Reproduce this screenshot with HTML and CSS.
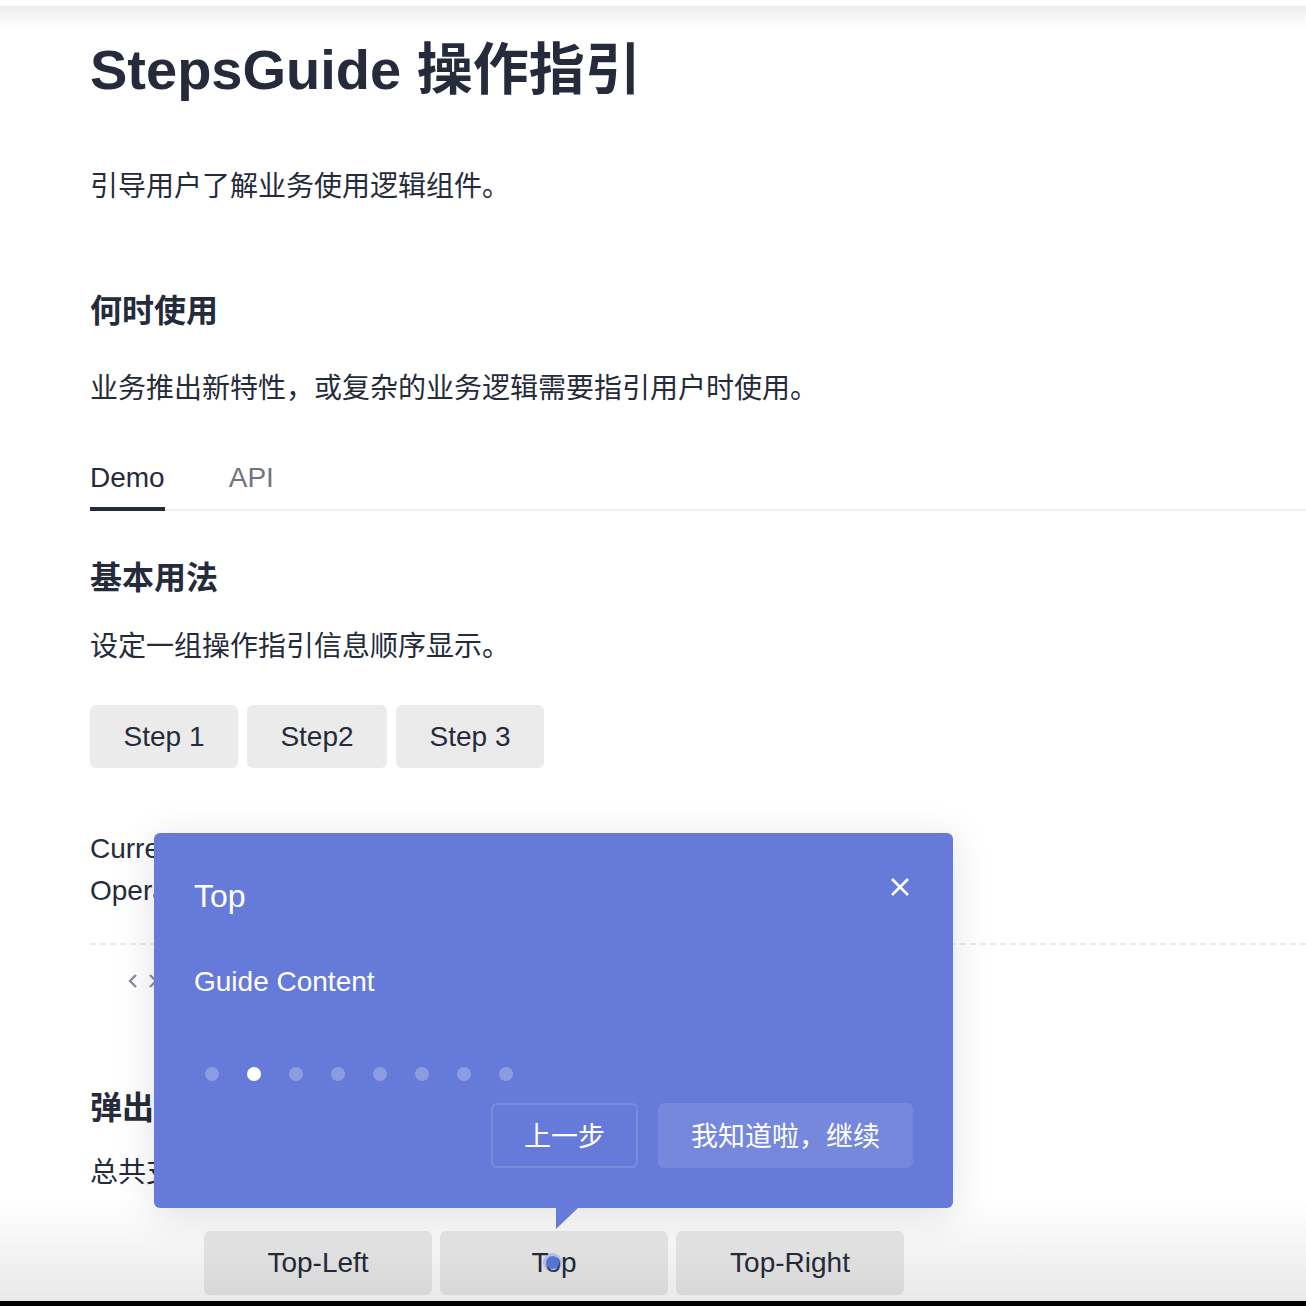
FILE: index.html
```html
<!DOCTYPE html>
<html lang="zh">
<head>
<meta charset="utf-8">
<title>StepsGuide 操作指引</title>
<link rel="stylesheet" href="styles.css">
</head>
<body>
<div class="top-shade"></div>
<main class="page">
  <h1 class="title">StepsGuide 操作指引</h1>
  <p class="desc first">引导用户了解业务使用逻辑组件。</p>
  <h2 class="heading h-when">何时使用</h2>
  <p class="desc when">业务推出新特性，或复杂的业务逻辑需要指引用户时使用。</p>

  <nav class="tabs">
    <span class="tab active">Demo</span>
    <span class="tab">API</span>
  </nav>

  <h3 class="heading h-basic">基本用法</h3>
  <p class="desc basic">设定一组操作指引信息顺序显示。</p>

  <div class="btn-row">
    <button class="btn w148">Step 1</button>
    <button class="btn w140">Step2</button>
    <button class="btn w148">Step 3</button>
  </div>

  <div class="status">
    <div>Current Step: 1</div>
    <div>Operation: next</div>
  </div>

  <div class="dashed"></div>
  <div class="code-toggle">
    <svg width="30" height="18" viewBox="0 0 30 18"><path d="M8 3 L2 9 L8 15" fill="none" stroke="#8a8e99" stroke-width="2.4"/><path d="M22 3 L28 9 L22 15" fill="none" stroke="#8a8e99" stroke-width="2.4"/></svg>
  </div>

  <h3 class="heading h-pop">弹出位置</h3>
  <p class="desc pop">总共支持 12 种弹出位置。</p>

  <div class="btn-row pos-row">
    <button class="btn w228">Top-Left</button>
    <button class="btn w228 has-dot">Top<span class="guide-dot"></span></button>
    <button class="btn w228">Top-Right</button>
  </div>
</main>

<div class="guide">
  <div class="guide-title">Top</div>
  <svg class="guide-close" width="20" height="20" viewBox="0 0 20 20"><path d="M2 2 L18 18 M18 2 L2 18" stroke="#ffffff" stroke-width="2.6" fill="none"/></svg>
  <div class="guide-content">Guide Content</div>
  <div class="guide-dots">
    <span class="dot"></span><span class="dot on"></span><span class="dot"></span><span class="dot"></span><span class="dot"></span><span class="dot"></span><span class="dot"></span><span class="dot"></span>
  </div>
  <div class="guide-actions">
    <button class="g-btn prev">上一步</button>
    <button class="g-btn next">我知道啦，继续</button>
  </div>
  <span class="guide-arrow"></span>
</div>

<div class="bottom-shade"></div>
<div class="bottom-bar"></div>
</body>
</html>
```

FILE: styles.css
```css
html, body {
  margin: 0;
  padding: 0;
  background: #ffffff;
  overflow: hidden;
}
body {
  width: 1306px;
  height: 1306px;
  position: relative;
  font-family: "Liberation Sans", "Noto Sans CJK SC", sans-serif;
  color: #252b3a;
}
.top-shade {
  position: absolute;
  left: 0;
  top: 6px;
  width: 100%;
  height: 22px;
  background: linear-gradient(to bottom, #eeeeee, rgba(255,255,255,0));
  z-index: 5;
}
.page {
  padding: 0 0 0 90px;
}
.title {
  margin: 30px 0 0 0;
  font-size: 56px;
  line-height: 80px;
  font-weight: 700;
}
.desc {
  margin: 0;
  font-size: 28px;
  line-height: 40px;
  font-family: "Noto Sans CJK SC", "Liberation Sans", sans-serif;
}
.desc.first { margin-top: 54px; }
.desc.when { margin-top: 36px; }
.desc.basic { margin-top: 27px; }
.desc.pop { margin-top: 23px; }
.heading {
  margin: 0;
  font-size: 32px;
  line-height: 44px;
  font-weight: 700;
  font-family: "Noto Sans CJK SC", "Liberation Sans", sans-serif;
}
.h-when { margin-top: 82px; }
.h-basic { margin-top: 42px; }
.h-pop { margin-top: 82px; }

.tabs {
  display: flex;
  margin-top: 52px;
  border-bottom: 2px solid #eeeeee;
}
.tab {
  font-size: 28px;
  line-height: 40px;
  color: #71757f;
  padding-bottom: 9px;
  border-bottom: 4px solid transparent;
  margin-bottom: -2px;
  margin-right: 64px;
}
.tab.active {
  color: #252b3a;
  border-bottom-color: #252b3a;
}

.btn-row {
  display: flex;
  gap: 9px;
  margin-top: 41px;
}
.btn {
  height: 63px;
  border: none;
  border-radius: 6px;
  background: #ebebeb;
  font-family: "Liberation Sans", "Noto Sans CJK SC", sans-serif;
  font-size: 28px;
  color: #252b3a;
  padding: 0;
}
.w148 { width: 148px; }
.w140 { width: 140px; }
.w228 { width: 228px; height: 64px; }
.pos-row {
  margin-left: 114px;
  gap: 8px;
}
.has-dot { position: relative; }
.guide-dot {
  position: absolute;
  left: 106px;
  top: 25px;
  width: 13px;
  height: 13px;
  border-radius: 50%;
  background: #5e7ce0;
  box-shadow: 0 0 0 3px rgba(94,124,224,0.3);
}

.status {
  margin-top: 60px;
  font-size: 28px;
  line-height: 42px;
}
.dashed {
  margin-top: 31px;
  border-top: 2px dashed #ebebeb;
}
.code-toggle {
  margin-top: 16px;
  height: 40px;
  display: flex;
  align-items: center;
  padding-left: 38px;
}

.guide {
  position: absolute;
  left: 154px;
  top: 833px;
  width: 799px;
  box-sizing: border-box;
  padding: 40px;
  background: #667bd9;
  border-radius: 6px;
  color: #ffffff;
  box-shadow: 0 6px 40px rgba(0,0,0,0.12);
  z-index: 3;
}
.guide-title {
  margin-top: 3px;
  font-size: 32px;
  line-height: 40px;
}
.guide-close {
  position: absolute;
  right: 43px;
  top: 44px;
}
.guide-content {
  margin-top: 46px;
  font-size: 28px;
  line-height: 40px;
}
.guide-dots {
  display: flex;
  gap: 28px;
  margin-top: 65px;
  padding-left: 11px;
}
.dot {
  width: 14px;
  height: 14px;
  border-radius: 50%;
  background: rgba(255,255,255,0.25);
}
.dot.on { background: #ffffff; }
.guide-actions {
  display: flex;
  justify-content: flex-end;
  gap: 20px;
  margin-top: 22px;
}
.g-btn {
  height: 65px;
  border-radius: 6px;
  font-family: "Noto Sans CJK SC", "Liberation Sans", sans-serif;
  font-size: 27px;
  line-height: 1;
  color: #ffffff;
  padding: 0 0 3px 0;
}
.g-btn.prev {
  width: 147px;
  background: transparent;
  border: 2px solid rgba(255,255,255,0.12);
}
.g-btn.next {
  width: 255px;
  border: none;
  background: rgba(255,255,255,0.1);
}
.guide-arrow {
  position: absolute;
  left: 402px;
  top: 100%;
  width: 22px;
  height: 21px;
  background: #667bd9;
  clip-path: polygon(0 0, 100% 0, 0 100%);
}

.bottom-shade {
  position: absolute;
  left: 0;
  top: 1200px;
  width: 100%;
  height: 101px;
  background: linear-gradient(to bottom, rgba(0,0,0,0), rgba(0,0,0,0.09));
  z-index: 2;
  pointer-events: none;
}
.bottom-bar {
  position: absolute;
  left: 0;
  top: 1301px;
  width: 100%;
  height: 5px;
  background: #000000;
  z-index: 6;
}
```
